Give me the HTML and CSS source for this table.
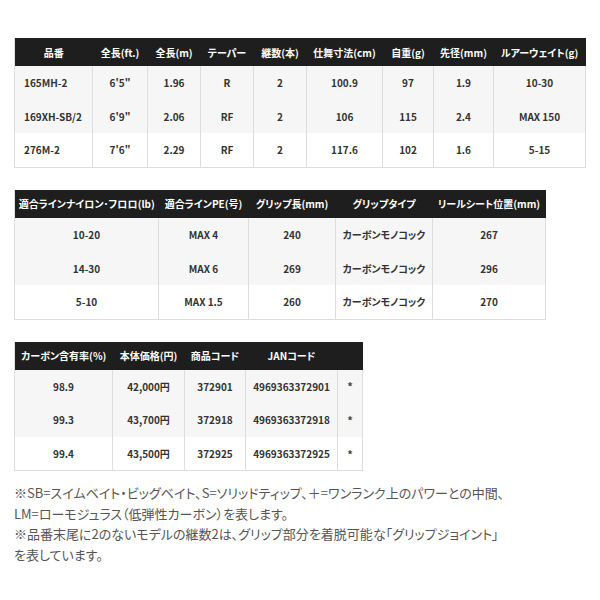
FILE: index.html
```html
<!DOCTYPE html>
<html lang="ja">
<head>
<meta charset="utf-8">
<link rel="stylesheet" href="styles.css">
</head>
<body>
<div class="page">
  <table class="spec t1">
    <colgroup>
      <col class="c78"><col class="c55"><col class="c53"><col class="c53"><col class="c53"><col class="c76"><col class="c51"><col class="c60"><col class="c92">
    </colgroup>
    <thead>
      <tr><th>品番</th><th>全長(ft.)</th><th>全長(m)</th><th>テーパー</th><th>継数(本)</th><th>仕舞寸法(cm)</th><th>自重(g)</th><th>先径(mm)</th><th>ルアーウェイト(g)</th></tr>
    </thead>
    <tbody>
      <tr class="gray"><td class="left">165MH-2</td><td>6'5"</td><td>1.96</td><td>R</td><td>2</td><td>100.9</td><td>97</td><td>1.9</td><td>10-30</td></tr>
      <tr class="gray"><td class="left">169XH-SB/2</td><td>6'9"</td><td>2.06</td><td>RF</td><td>2</td><td>106</td><td>115</td><td>2.4</td><td>MAX 150</td></tr>
      <tr><td class="left">276M-2</td><td>7'6"</td><td>2.29</td><td>RF</td><td>2</td><td>117.6</td><td>102</td><td>1.6</td><td>5-15</td></tr>
    </tbody>
  </table>

  <table class="spec t2">
    <colgroup>
      <col class="c144"><col class="c90"><col class="c87"><col class="c97"><col class="c113">
    </colgroup>
    <thead>
      <tr><th>適合ラインナイロン･フロロ(lb)</th><th>適合ラインPE(号)</th><th>グリップ長(mm)</th><th>グリップタイプ</th><th>リールシート位置(mm)</th></tr>
    </thead>
    <tbody>
      <tr class="gray"><td>10-20</td><td>MAX 4</td><td>240</td><td>カーボンモノコック</td><td>267</td></tr>
      <tr class="gray"><td>14-30</td><td>MAX 6</td><td>269</td><td>カーボンモノコック</td><td>296</td></tr>
      <tr><td>5-10</td><td>MAX 1.5</td><td>260</td><td>カーボンモノコック</td><td>270</td></tr>
    </tbody>
  </table>

  <table class="spec t3">
    <colgroup>
      <col class="c98"><col class="c72"><col class="c61"><col class="c92"><col class="c25">
    </colgroup>
    <thead>
      <tr><th>カーボン含有率(%)</th><th>本体価格(円)</th><th>商品コード</th><th>JANコード</th><th></th></tr>
    </thead>
    <tbody>
      <tr class="gray"><td>98.9</td><td>42,000円</td><td>372901</td><td>4969363372901</td><td class="star">*</td></tr>
      <tr class="gray"><td>99.3</td><td>43,700円</td><td>372918</td><td>4969363372918</td><td class="star">*</td></tr>
      <tr><td>99.4</td><td>43,500円</td><td>372925</td><td>4969363372925</td><td class="star">*</td></tr>
    </tbody>
  </table>

  <p class="notes">※SB=スイムベイト・ビッグベイト、S=ソリッドティップ、＋=ワンランク上のパワーとの中間、<br>LM=ローモジュラス（低弾性カーボン）を表します。<br>※品番末尾に2のないモデルの継数2は、グリップ部分を着脱可能な「グリップジョイント」<br>を表しています。</p>
</div>
</body>
</html>
```

FILE: styles.css
```css
html, body {
  margin: 0;
  padding: 0;
  background: #ffffff;
}

.page {
  padding: 38px 0 0 14px;
  font-family: "Noto Sans CJK JP", "Noto Sans", sans-serif;
}

.spec {
  border-collapse: collapse;
  table-layout: fixed;
  font-size: 10px;
  font-weight: 700;
  font-feature-settings: "palt" 1;
  color: #333333;
  border-left: 1px solid #dddddd;
  border-bottom: 1px solid #dddddd;
  margin: 0 0 22px 0;
}

.t1 { width: 571px; }
.t2 { width: 531px; }
.t3 { width: 349px; }

.c25 { width: 25px; }
.c51 { width: 51px; }
.c53 { width: 53px; }
.c55 { width: 55px; }
.c60 { width: 60px; }
.c61 { width: 61px; }
.c72 { width: 72px; }
.c76 { width: 76px; }
.c78 { width: 78px; }
.c87 { width: 87px; }
.c90 { width: 90px; }
.c92 { width: 92px; }
.c97 { width: 97px; }
.c98 { width: 98px; }
.c113 { width: 113px; }
.c144 { width: 144px; }

.spec th {
  background: #1e1e1e;
  color: #ffffff;
  height: 28px;
  padding: 0;
  text-align: center;
  vertical-align: middle;
  white-space: nowrap;
  font-weight: 700;
}

.spec td {
  height: 33.6px;
  padding: 0;
  text-align: center;
  vertical-align: middle;
  border-right: 1px solid #dddddd;
  white-space: nowrap;
}

.spec tr.gray td {
  background: #f6f6f6;
}

.spec td.left {
  text-align: left;
  padding-left: 9px;
}

.spec td.star {
  font-weight: 700;
  font-size: 11px;
  color: #444444;
}

.notes {
  margin: -10px 0 0 0;
  font-size: 13px;
  line-height: 20.5px;
  color: #555555;
  font-feature-settings: "palt" 1;
  font-weight: 400;
}
```
